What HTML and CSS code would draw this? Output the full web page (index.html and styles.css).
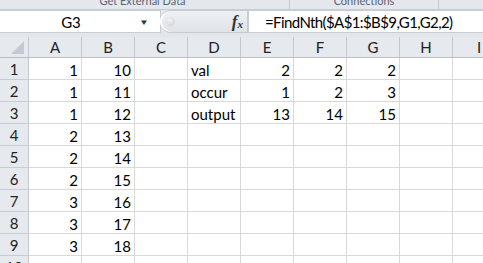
FILE: index.html
```html
<!DOCTYPE html>
<html lang="en">
<head>
    <meta charset="UTF-8">
    <title>FindNth</title>
    <link rel="stylesheet" href="styles.css">
</head>
<body>
    <div class="ribbon">
        <div class="group group-data"><span>Get External Data</span></div>
        <div class="group group-conn"><span>Connections</span></div>
        <div class="group group-rest"></div>
    </div>

    <div class="formula-bar">
        <div class="name-box">
            <span class="name">G3</span>
            <span class="arrow">&#9662;</span>
        </div>
        <div class="pill">
            <span class="grip"></span>
            <span class="fx">f<sub>x</sub></span>
        </div>
        <div class="formula">=FindNth($A$1:$B$9,G1,G2,2)</div>
    </div>

    <div class="sheet" id="sheet"></div>

    <script>
        const cols = ['A', 'B', 'C', 'D', 'E', 'F', 'G', 'H', 'I'];
        const data = [
            [1, 10, '', 'val', 2, 2, 2],
            [1, 11, '', 'occur', 1, 2, 3],
            [1, 12, '', 'output', 13, 14, 15],
            [2, 13],
            [2, 14],
            [2, 15],
            [3, 16],
            [3, 17],
            [3, 18],
            []
        ];
        const sheet = document.getElementById('sheet');

        let html = '<div class="corner"><span class="tri"></span></div>';
        cols.forEach(c => { html += `<div class="col-head">${c}</div>`; });

        data.forEach((row, r) => {
            html += `<div class="row-head">${r + 1}</div>`;
            cols.forEach((c, i) => {
                const v = row[i] === undefined ? '' : row[i];
                const cls = typeof v === 'number' ? 'cell num' : 'cell';
                html += `<div class="${cls}">${v}</div>`;
            });
        });
        sheet.innerHTML = html;
    </script>
</body>
</html>
```

FILE: styles.css
```css
* {
    box-sizing: border-box;
}
body {
    margin: 0;
    width: 483px;
    height: 263px;
    overflow: hidden;
    background: #fff;
    font-family: Lato, "Open Sans", sans-serif;
    color: #000;
}

/* ribbon bottom edge */
.ribbon {
    display: flex;
    height: 10px;
    background: #e4e8ed;
    border-bottom: 1px solid #c5ccd4;
    overflow: hidden;
}
.group {
    border-right: 1px solid #c2c8d0;
    font-size: 11px;
    color: #5a6370;
    text-align: center;
    line-height: 11px;
}
.group span {
    display: block;
    margin-top: -5px;
}
.group-data {
    width: 290px;
    padding-right: 4px;
}
.group-conn {
    width: 149px;
}
.group-rest {
    flex: 1;
    border-right: none;
}

/* formula bar */
.formula-bar {
    display: flex;
    height: 27px;
    background: #e3e7ec;
    padding-bottom: 4px;
}
.name-box {
    width: 161px;
    background: #fff;
    border: 1px solid #c9ced5;
    border-left: none;
    display: flex;
    align-items: center;
}
.name {
    width: 142px;
    text-align: center;
    font-size: 15px;
    padding-top: 1px;
}
.arrow {
    font-size: 9px;
    color: #333;
    transform: scaleX(1.3);
}
.pill {
    width: 88px;
    display: flex;
    align-items: center;
    background: linear-gradient(#eef1f4, #dfe3e8);
    border: 1px solid #c5cbd2;
    border-left: none;
    border-radius: 12px 0 0 12px;
    margin-left: -1px;
    box-shadow: inset 2px 0 0 #fff;
}
.grip {
    width: 9px;
    height: 9px;
    margin-left: 6px;
    border-radius: 50%;
    background: radial-gradient(circle at 40% 35%, #f2f4f6, #c7ccd2);
}
.fx {
    margin-left: auto;
    margin-right: 4px;
    font-family: "Liberation Serif", serif;
    font-style: italic;
    font-weight: bold;
    font-size: 17px;
    color: #333;
}
.fx sub {
    font-size: 11px;
    vertical-align: -1px;
}
.formula {
    flex: 1;
    background: #fff;
    border: 1px solid #c9ced5;
    border-right: none;
    padding-left: 16px;
    font-size: 15px;
    letter-spacing: -0.6px;
    line-height: 22px;
}

/* grid */
.sheet {
    display: grid;
    grid-template-columns: 29px repeat(9, 53px);
    grid-template-rows: 21px repeat(10, 22px);
}
.corner,
.col-head,
.row-head {
    background: #e6e9ed;
    border-right: 1px solid #c3c8cf;
    border-bottom: 1px solid #b9bfc7;
    font-size: 15px;
    color: #222;
}
.corner {
    position: relative;
}
.tri {
    position: absolute;
    right: 4px;
    bottom: 3px;
    width: 0;
    height: 0;
    border-left: 13px solid transparent;
    border-bottom: 13px solid #c4c9cf;
}
.col-head {
    text-align: center;
    line-height: 20px;
}
.row-head {
    text-align: center;
    line-height: 23px;
    border-bottom-color: #c8cdd3;
}
.cell {
    border-right: 1px solid #d9d9d9;
    border-bottom: 1px solid #d9d9d9;
    font-size: 15px;
    line-height: 21px;
    padding: 2px 3px 0;
    white-space: nowrap;
}
.cell.num {
    text-align: right;
}
```
